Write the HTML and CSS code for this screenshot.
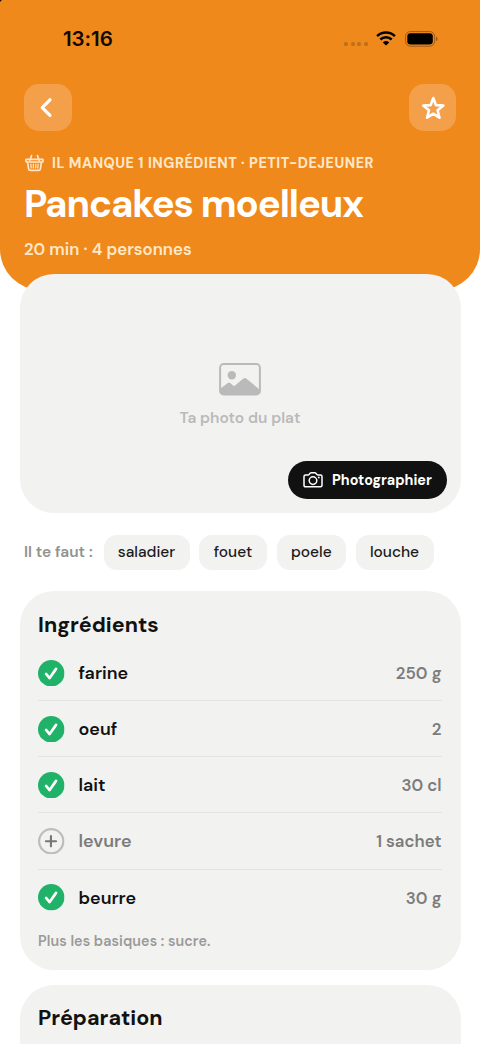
FILE: index.html
```html
<!DOCTYPE html>
<html lang="fr">
<head>
<meta charset="utf-8">
<meta name="viewport" content="width=device-width, initial-scale=1">
<title>Pancakes moelleux</title>
<link rel="stylesheet" href="styles.css">
</head>
<body>
<svg width="0" height="0" class="defs" aria-hidden="true">
  <symbol id="check" viewBox="0 0 26 26">
    <circle cx="13" cy="13" r="13" fill="#1fb268"/>
    <path d="M7.900 13.700l3.500 4L17.700 8.700" fill="none" stroke="#fff" stroke-width="2.600" stroke-linecap="round" stroke-linejoin="round"/>
  </symbol>
  <symbol id="plus" viewBox="0 0 26 26">
    <circle cx="13" cy="13" r="11.900" fill="none" stroke="#bdbdbc" stroke-width="2.200"/>
    <path d="M12.700 8v10M7.700 13h10" fill="none" stroke="#777775" stroke-width="2.100" stroke-linecap="round"/>
  </symbol>
</svg>
<div class="screen">
  <header class="hero">
    <div class="status">
      <span class="time">13:16</span>
      <div class="signals">
        <span class="dots"><i></i><i></i><i></i><i></i></span>
        <svg class="wifi" width="20" height="15" viewBox="0 0 20 15">
          <path d="M1.100 5.200a12.700 12.700 0 0 1 17.800 0M4.300 8.500a8.100 8.100 0 0 1 11.400 0" fill="none" stroke="#000" stroke-width="2.500"/>
          <path d="M10 14.600l-3.200-3.200a4.700 4.700 0 0 1 6.400 0z" fill="#000"/>
        </svg>
        <svg class="battery" width="33" height="16" viewBox="0 0 33 16">
          <rect x=".6" y=".6" width="29" height="14.600" rx="4.700" fill="none" stroke="#9f5a12" stroke-width="1"/>
          <rect x="2.300" y="2.300" width="25.500" height="11.200" rx="3.200" fill="#000"/>
          <path d="M31 5.400q3.400 2.500 0 5z" fill="#9f5a12"/>
        </svg>
      </div>
    </div>
    <nav class="actions">
      <button class="square" aria-label="Retour">
        <svg width="48" height="48" viewBox="0 0 48 48"><path d="M26 15.800L18.200 23.600l7.800 7.800" fill="none" stroke="#fff" stroke-width="3.200" stroke-linecap="round" stroke-linejoin="round"/></svg>
      </button>
      <button class="square" aria-label="Favori">
        <svg width="48" height="48" viewBox="0 0 48 48"><path d="M24.300 14l2.600 7.100 7.500.4-5.800 4.800 1.900 7.400-6.200-4-6.200 4 1.900-7.400-5.800-4.800 7.500-.4z" fill="none" stroke="#fff" stroke-width="2.600" stroke-linejoin="round"/></svg>
      </button>
    </nav>
    <div class="eyebrow">
      <svg width="19" height="18" viewBox="0 0 20 18" fill="none" stroke="#ffe8c9" stroke-width="1.700" stroke-linecap="round" stroke-linejoin="round">
        <path d="M1.600 5.200h16.800q.6 0 .6.700v1.200q0 .8-.7.800H1.700Q1 7.900 1 7.100V5.900q0-.7.600-.7zM2.700 8.200l1.100 6.900q.3 1.700 1.900 1.700h8.600q1.600 0 1.900-1.700l1.100-6.900M6.900 1.200L5 6.200M13.100 1.200L15 6.200"/>
        <path d="M6.200 10.200l.3 4M8.800 10.200v4M11.300 10.200v4M13.800 10.200l-.3 4" stroke-width="1.300"/>
      </svg>
      <span>IL MANQUE 1 INGRÉDIENT · PETIT-DEJEUNER</span>
    </div>
    <h1>Pancakes moelleux</h1>
    <p class="meta">20 min · 4 personnes</p>
  </header>
  <main>
    <section class="photo">
      <svg width="42" height="34" viewBox="0 0 42 34">
        <rect x="1.100" y="1.100" width="39.800" height="30.300" rx="3.500" fill="none" stroke="#bababa" stroke-width="2"/>
        <circle cx="12.800" cy="12.200" r="4.200" fill="#bababa"/>
        <path d="M1.500 25.500l7.300-5.600q1.200-.9 2.400.1l3.900 3.300 9-7.600q1.700-1.300 3.400.1l12.700 10.400v2.200q0 3-3 3H4.500q-3 0-3-3z" fill="#bababa"/>
      </svg>
      <span class="hint">Ta photo du plat</span>
      <button class="shoot">
        <svg width="20" height="16" viewBox="0 0 20 16" fill="none" stroke="#fff" stroke-width="1.500" stroke-linejoin="round">
          <path d="M2.500 2.900h2.700q.8 0 1.200-.7.800-1.400 1.700-1.400h3.800q.9 0 1.700 1.400.4.700 1.200.7h2.700q1.500 0 1.500 1.500v8.900q0 1.500-1.500 1.500h-15Q1 14.800 1 13.300V4.400q0-1.500 1.500-1.500z"/>
          <circle cx="10" cy="8.600" r="3.800"/>
          <circle cx="15.800" cy="5.500" r=".9" fill="#fff" stroke="none"/>
        </svg>
        <span>Photographier</span>
      </button>
    </section>
    <section class="tools">
      <span class="need">Il te faut :</span>
      <span class="chip c1">saladier</span>
      <span class="chip c2">fouet</span>
      <span class="chip c3">poele</span>
      <span class="chip c4">louche</span>
    </section>
    <section class="card ingredients">
      <h2>Ingrédients</h2>
      <ul>
        <li><svg><use href="#check"/></svg><span class="name">farine</span><span class="qty">250 g</span></li>
        <li><svg><use href="#check"/></svg><span class="name">oeuf</span><span class="qty">2</span></li>
        <li><svg><use href="#check"/></svg><span class="name">lait</span><span class="qty">30 cl</span></li>
        <li class="missing"><svg><use href="#plus"/></svg><span class="name">levure</span><span class="qty">1 sachet</span></li>
        <li><svg><use href="#check"/></svg><span class="name">beurre</span><span class="qty">30 g</span></li>
      </ul>
      <p class="basics">Plus les basiques : sucre.</p>
    </section>
    <section class="card">
      <h2>Préparation</h2>
    </section>
  </main>
</div>
</body>
</html>
```
FILE: styles.css
```css
* { box-sizing: border-box; margin: 0; padding: 0; }
body { background: #fff; font-family: "DM Sans", Inter, "Open Sans", sans-serif; font-optical-sizing: none; color: #111; }
button { border: 0; font: inherit; color: inherit; }
svg { display: block; flex: none; }
.defs { position: absolute; }
.screen { height: 1044px; overflow: hidden; }

.hero { height: 290px; background: radial-gradient(circle at 0 0, #1a0f03 1px, #f0891c 2px); border-radius: 0 0 41px 41px; color: #fff; padding: 0 24px; white-space: nowrap; }
.status { height: 83.500px; padding: 27px 18px 0 39px; display: flex; justify-content: space-between; }
.time { font-family: Inter, sans-serif; font-size: 20.500px; line-height: 23px; font-weight: 600; letter-spacing: -.05px; color: #120a02; }
.signals { display: flex; align-items: flex-start; padding-top: 4px; }
.dots { display: flex; gap: 2.400px; padding-top: 11px; margin-right: 8.500px; }
.dots i { width: 4px; height: 4px; border-radius: 1.500px; background: #c07018; }
.battery { margin-left: 9px; }
.actions { display: flex; justify-content: space-between; }
.square { width: 47.500px; height: 47.500px; border-radius: 15px; background: #f4a04b; }
.eyebrow { display: flex; align-items: center; height: 20px; margin-top: 21.500px; padding-left: 1px; gap: 8px; font-size: 14.300px; font-weight: 700; letter-spacing: .52px; color: #ffe8c9; }
h1 { margin-top: 7.500px; font-size: 38.200px; line-height: 48px; font-weight: 700; letter-spacing: -1.080px; }
.meta { margin-top: 10.500px; font-size: 16.700px; line-height: 20px; font-weight: 630; letter-spacing: .04px; color: #ffe8c9; }

main { padding: 0 19.500px; margin-top: -15.600px; position: relative; white-space: nowrap; }
.photo { height: 238.800px; border-radius: 34px; background: #f2f2f0; display: flex; flex-direction: column; align-items: center; padding: 88.500px 14px 14.300px; }
.hint { margin-top: 11px; font-size: 15.500px; line-height: 20px; font-weight: 650; color: #bababa; }
.shoot { margin-top: auto; align-self: flex-end; width: 159px; height: 38px; border-radius: 19px; background: #111; color: #fff; display: flex; align-items: center; gap: 9px; padding-left: 15.500px; font-size: 14.330px; font-weight: 700; }
.tools { display: flex; align-items: center; height: 35px; margin: 21.500px 0; padding-left: 4.500px; gap: 9.500px; }
.need { width: 70px; font-size: 15.500px; font-weight: 640; color: #929290; }
.chip { height: 35px; border-radius: 13px; background: #f2f2f0; display: flex; align-items: center; justify-content: center; font-size: 15.500px; font-weight: 530; color: #1b1b1a; }
.c1 { width: 86px; }
.c2 { width: 68px; }
.c3 { width: 69.500px; }
.c4 { width: 78px; }
.card { background: #f2f2f0; border-radius: 34px; padding: 19.500px 19px 0 18.500px; height: 300px; }
.ingredients { height: 378.500px; margin-bottom: 15px; }
h2 { font-size: 21.500px; line-height: 28px; font-weight: 700; letter-spacing: .03px; }
ul { list-style: none; margin-top: 6.500px; }
li { height: 56.100px; display: flex; align-items: center; border-bottom: 1px solid #e3e3e1; font-weight: 640; font-size: 17.900px; }
li:last-child { border: 0; }
li svg { width: 26.500px; height: 26.500px; margin-right: 14px; }
.qty { margin-left: auto; font-size: 16.800px; color: #7c7c7a; }
.missing .name { color: #7c7c7a; }
.basics { margin-top: 5.500px; font-size: 14.330px; line-height: 20px; font-weight: 630; letter-spacing: .09px; color: #9a9a98; }
```
